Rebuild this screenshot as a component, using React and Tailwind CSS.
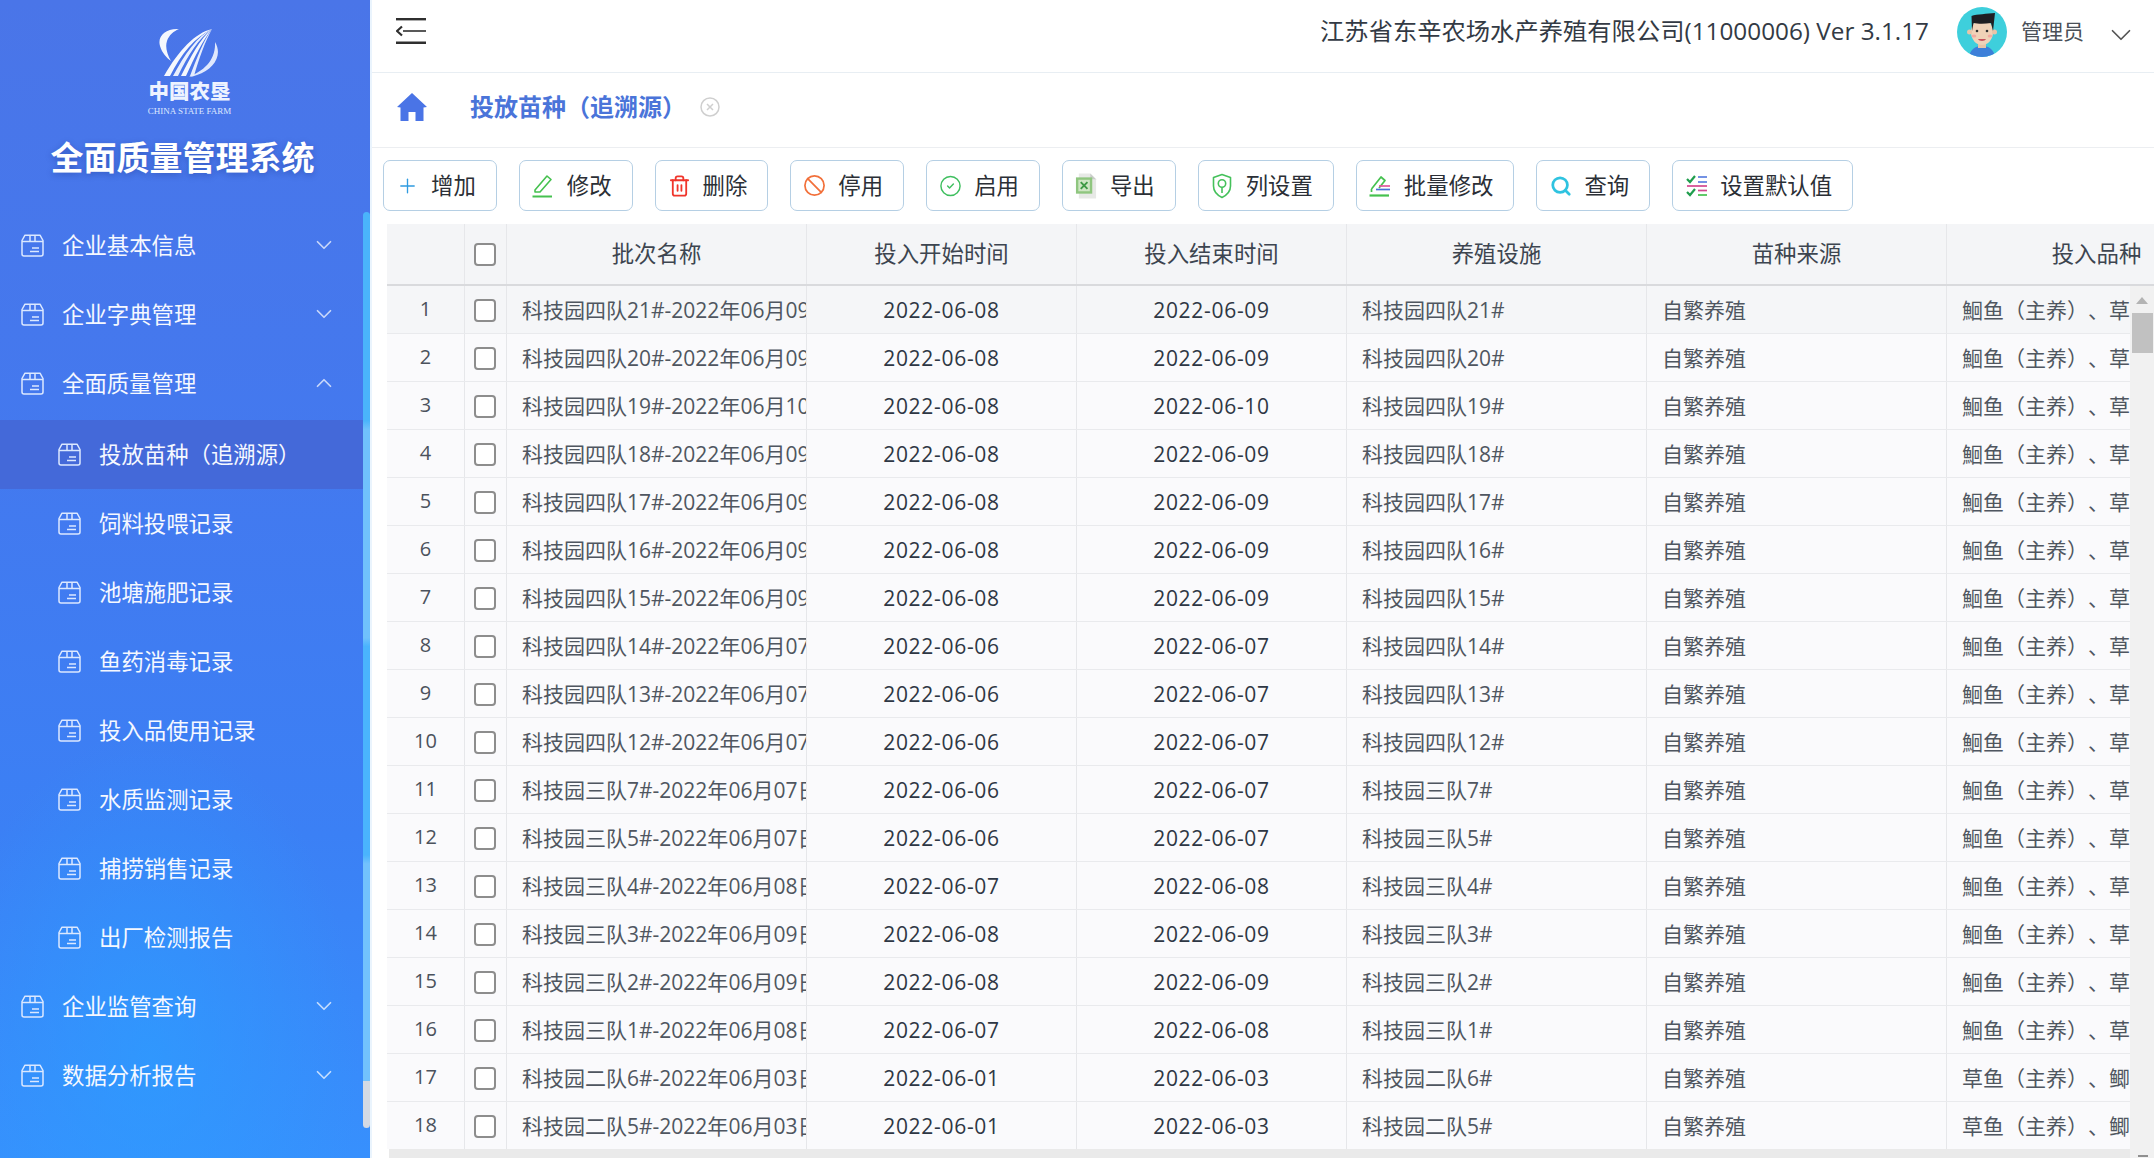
import React from "react";
import { Plus, Trash2, Ban, CircleCheck, Search, ChevronDown, ChevronUp } from "lucide-react";

const FONT = "[font-family:'Open_Sans','Noto_Sans_CJK_SC',sans-serif]";

function BoxIcon() {
  return (
    <svg width="23" height="23" viewBox="0 0 23 23" fill="none" stroke="#dbe8ff" strokeWidth="1.5" className="shrink-0">
      <path d="M1 6.5 L4 1.2 H19 L22 6.5 V20 a2 2 0 0 1 -2 2 H3 a2 2 0 0 1 -2 -2 Z" strokeLinejoin="round" />
      <path d="M1 7.5 H22" />
      <path d="M9 1.2 V7.5 M14 1.2 V7.5" />
      <path d="M11 14 H18 M9 17.5 H18" />
    </svg>
  );
}

function Logo() {
  return (
    <svg width="62" height="50" viewBox="0 0 62 50" fill="none" className="opacity-95 ml-[9px]">
      <path d="M20 1 C7 0 -2 8 1 18 C3 25 8 30 12 33 C8 26 6 19 8 13 C10 7 15 3 20 1 Z" fill="#ffffff" />
      <path d="M56 14 C64 27 55 41 38 47 C35 48 32 49 30 49 C44 43 57 33 56 14 Z" fill="#e8efff" />
      <path d="M53 1 C36 5 20 22 5 48 H11 C22 26 36 9 53 1 Z" fill="#ffffff" />
      <path d="M53 1 C38 8 26 26 14 48 H19 C29 27 40 10 53 1 Z" fill="#f2f6ff" />
      <path d="M53 1 C41 11 32 28 22 48 H27 C36 28 44 12 53 1 Z" fill="#ffffff" />
      <path d="M53 1 C44 13 38 30 31 48 H35 C40 30 46 14 53 1 Z" fill="#eef3ff" />
    </svg>
  );
}

function Avatar() {
  return (
    <svg width="50" height="50" viewBox="0 0 50 50" className="shrink-0">
      <defs>
        <clipPath id="av"><circle cx="25" cy="25" r="25" /></clipPath>
      </defs>
      <g clipPath="url(#av)">
        <rect width="50" height="50" fill="#3ecfdc" />
        <path d="M12 50 C13 42 19 39 25 39 C31 39 37 42 38 50 Z" fill="#3d7fd9" />
        <rect x="21" y="32" width="8" height="9" fill="#e8c4a8" />
        <ellipse cx="25" cy="25" rx="11" ry="13" fill="#f0d2b8" />
        <circle cx="12.5" cy="25" r="2.5" fill="#e8c4a8" />
        <circle cx="37.5" cy="25" r="2.5" fill="#e8c4a8" />
        <path d="M15 24 L14.5 9 C20 7 30 7 38 6 L36 24 L34 16 C28 17 21 17 16.5 16 Z" fill="#1e1e22" />
        <circle cx="20" cy="24" r="1.3" fill="#333" />
        <circle cx="30" cy="24" r="1.3" fill="#333" />
        <ellipse cx="17" cy="29" rx="2.4" ry="1.6" fill="#f3a9a2" />
        <ellipse cx="33" cy="29" rx="2.4" ry="1.6" fill="#f3a9a2" />
        <path d="M21 32 H29 C28 34.5 22 34.5 21 32 Z" fill="#c9515c" />
      </g>
    </svg>
  );
}

function EditIcon() {
  return (
    <svg width="22" height="26" viewBox="0 0 22 26" fill="none" stroke="#45c14f" strokeWidth="1.6">
      <path d="M3 17 L15 3 L19 6.5 L8 19 H3 Z" strokeLinejoin="round" />
      <path d="M0.5 23.5 H20" strokeWidth="2" />
    </svg>
  );
}
function ExcelIcon() {
  return (
    <svg width="26" height="30" viewBox="0 0 24 28">
      <path d="M4 1 H16 L22 7 V27 H4 Z" fill="#e7e9e6" />
      <path d="M16 1 L22 7 H16 Z" fill="#c9ccc9" />
      <rect x="1" y="5" width="17" height="17" fill="#8fc67f" />
      <rect x="3.5" y="7.5" width="12" height="12" fill="#cfe6c4" />
      <path d="M6 10 L13 17 M13 10 L6 17" stroke="#3f9a45" strokeWidth="2" />
    </svg>
  );
}
function ShieldIcon() {
  return (
    <svg width="20" height="26" viewBox="0 0 20 26" fill="none" stroke="#45c15b" strokeWidth="1.6">
      <path d="M10 1.5 L18.5 4.5 V13 C18.5 18.5 14 22.5 10 24.5 C6 22.5 1.5 18.5 1.5 13 V4.5 Z" strokeLinejoin="round" />
      <circle cx="10" cy="10.5" r="3.7" />
      <path d="M10 14.2 V20" />
    </svg>
  );
}
function BatchIcon() {
  return (
    <svg width="22" height="24" viewBox="0 0 22 24" fill="none" strokeWidth="1.7">
      <path d="M2.5 15 L12 3 L16 6.5 L10 14 M2.5 15 V18" stroke="#45c14f" strokeLinejoin="round" />
      <path d="M10 12 H21" stroke="#e2559b" />
      <path d="M7 15.5 H21" stroke="#4a6fd8" />
      <path d="M0.5 21.5 H20" stroke="#45c14f" strokeWidth="2.2" />
    </svg>
  );
}
function ChecklistIcon() {
  return (
    <svg width="22" height="22" viewBox="0 0 22 22" fill="none" strokeWidth="2.2">
      <path d="M1 4 L4 7 L9 1" stroke="#1f9d4d" />
      <path d="M1 17 L4 20 L9 14" stroke="#1f9d4d" />
      <path d="M12 2 H21" stroke="#5b7fe0" strokeWidth="1.7" />
      <path d="M12 7 H21" stroke="#5b7fe0" strokeWidth="1.7" />
      <path d="M1 11 H21" stroke="#d2478f" strokeWidth="1.7" />
      <path d="M12 15.5 H21" stroke="#d2478f" strokeWidth="1.7" />
      <path d="M12 20 H21" stroke="#45c14f" strokeWidth="1.7" />
    </svg>
  );
}

const buttons = [
  { t: "增加", i: <Plus size={24} color="#2f9be0" strokeWidth={1.4} /> },
  { t: "修改", i: <EditIcon /> },
  { t: "删除", i: <Trash2 size={24} color="#f0352b" strokeWidth={1.9} /> },
  { t: "停用", i: <Ban size={25} color="#f2703a" strokeWidth={1.8} /> },
  { t: "启用", i: <CircleCheck size={26} color="#3fbf5f" strokeWidth={1.5} /> },
  { t: "导出", i: <ExcelIcon /> },
  { t: "列设置", i: <ShieldIcon /> },
  { t: "批量修改", i: <BatchIcon /> },
  { t: "查询", i: <Search size={22} color="#2fc3e0" strokeWidth={3} /> },
  { t: "设置默认值", i: <ChecklistIcon /> },
];

const menu = [
  { t: "企业基本信息", c: "down" },
  { t: "企业字典管理", c: "down" },
  { t: "全面质量管理", c: "up" },
  { t: "投放苗种（追溯源）", sub: true, active: true },
  { t: "饲料投喂记录", sub: true },
  { t: "池塘施肥记录", sub: true },
  { t: "鱼药消毒记录", sub: true },
  { t: "投入品使用记录", sub: true },
  { t: "水质监测记录", sub: true },
  { t: "捕捞销售记录", sub: true },
  { t: "出厂检测报告", sub: true },
  { t: "企业监管查询", c: "down" },
  { t: "数据分析报告", c: "down" },
];

const rows = [
  ["科技园四队21#", "06月09", "06-08", "06-09"],
  ["科技园四队20#", "06月09", "06-08", "06-09"],
  ["科技园四队19#", "06月10", "06-08", "06-10"],
  ["科技园四队18#", "06月09", "06-08", "06-09"],
  ["科技园四队17#", "06月09", "06-08", "06-09"],
  ["科技园四队16#", "06月09", "06-08", "06-09"],
  ["科技园四队15#", "06月09", "06-08", "06-09"],
  ["科技园四队14#", "06月07", "06-06", "06-07"],
  ["科技园四队13#", "06月07", "06-06", "06-07"],
  ["科技园四队12#", "06月07", "06-06", "06-07"],
  ["科技园三队7#", "06月07", "06-06", "06-07"],
  ["科技园三队5#", "06月07", "06-06", "06-07"],
  ["科技园三队4#", "06月08", "06-07", "06-08"],
  ["科技园三队3#", "06月09", "06-08", "06-09"],
  ["科技园三队2#", "06月09", "06-08", "06-09"],
  ["科技园三队1#", "06月08", "06-07", "06-08"],
  ["科技园二队6#", "06月03", "06-01", "06-03"],
  ["科技园二队5#", "06月03", "06-01", "06-03"],
];

function Checkbox({ cls = "" }) {
  return <span className={`block w-[22px] h-[23px] -ml-[1px] bg-white border-2 border-[#8d8d8d] rounded-[4px] ${cls}`} />;
}

const colBorder = "border-r border-[#e6e7ea] shrink-0";

function HeaderCell({ w, children }) {
  return (
    <div className={`${w} ${colBorder} h-full flex items-center justify-center text-[22.4px] text-[#3d4550] pb-[1px]`}>
      {children}
    </div>
  );
}

export default function App() {
  return (
    <div className={`${FONT} w-[2154px] h-[1158px] overflow-hidden flex bg-white`}>
      <aside className="relative w-[370px] h-full shrink-0 text-white bg-[radial-gradient(ellipse_210px_330px_at_150px_1060px,#2c9dffaa,transparent),linear-gradient(180deg,#4a75e8_0%,#4379ef_40%,#3b80f5_72%,#3790fd_100%)]">
        <div className="h-[211px] flex flex-col items-center pt-[28px]">
          <Logo />
          <div className="ml-[9px] mt-[1px] text-[20.5px] leading-[24px] font-black text-[#eef3ff]">中国农垦</div>
          <div className="ml-[9px] mt-[3px] text-[9px] leading-[10px] text-[#dfe8ff] [font-family:'Liberation_Serif',serif] whitespace-nowrap">CHINA STATE FARM</div>
          <div className="-ml-[5px] mt-[20px] text-[33px] leading-[44px] font-bold [text-shadow:0_2px_6px_rgba(20,40,120,0.35)]">全面质量管理系统</div>
        </div>
        <nav className="w-[363px]">
          {menu.map((m) => (
            <div
              key={m.t}
              className={`h-[69px] flex items-center gap-[18px] text-[22.4px] ${m.sub ? "pl-[58px]" : "pl-[21px]"} ${m.active ? "bg-[#4469d9] mt-[2px]" : ""}`}
            >
              <BoxIcon />
              <span className="text-[#f5f8ff] whitespace-nowrap">{m.t}</span>
              {m.c === "down" && <ChevronDown size={26} strokeWidth={1.6} className="ml-auto mr-[26px] -mt-[2px] text-white/70" />}
              {m.c === "up" && <ChevronUp size={26} strokeWidth={1.6} className="ml-auto mr-[26px] -mt-[2px] text-white/70" />}
            </div>
          ))}
        </nav>
        <div className="absolute right-0 top-[212px] w-[7px] h-[869px] rounded-t-[4px] bg-[linear-gradient(180deg,#4ab4fb_0%,#4ab4fb_24%,#70c1fc_25%,#70c1fc_49%,#4ab4fd_50%,#4ab4fd_74%,#72c2fd_75%,#72c2fd_100%)]" />
        <div className="absolute right-0 top-[1081px] w-[7px] h-[47px] rounded-b-[4px] bg-[#d4dae4]" />
      </aside>

      <main className="flex-1 min-w-0 h-full flex flex-col border-l-2 border-[#eaf4fd]">
        <header className="h-[73px] shrink-0 flex items-center border-b border-[#e8eef3]">
          <svg width="30" height="26" viewBox="0 0 30 26" fill="none" className="ml-[24px] -mt-[10px]" stroke="#2f2f2f">
            <path d="M0 1.2 H30" strokeWidth="2.4" />
            <path d="M7 13 H30" strokeWidth="1.6" />
            <path d="M6 8.5 L1 13 L6 17.5" strokeWidth="2.2" />
            <path d="M0 24.8 H30" strokeWidth="2.6" />
          </svg>
          <div className="ml-auto text-[24.3px] text-[#333a44] whitespace-nowrap -mt-[9px]">江苏省东辛农场水产养殖有限公司(11000006) Ver 3.1.17</div>
          <div className="ml-[28px] -mt-[8px]"><Avatar /></div>
          <div className="ml-[14px] text-[21px] text-[#4a5058] -mt-[9px]">管理员</div>
          <ChevronDown size={34} strokeWidth={1.2} className="ml-[20px] mr-[16px] -mt-[2px] text-[#555]" />
        </header>

        <div className="h-[75px] shrink-0 flex items-center border-b border-[#eceef1] pb-[7px]">
          <svg width="30" height="30" viewBox="0 0 30 30" className="ml-[25px]">
            <path d="M15 1 L30 15 L26.5 15.5 V29 H18.5 V20 H11.5 V29 H3.5 V15.5 L0 15 Z" fill="#4a74e6" strokeLinejoin="round" />
          </svg>
          <div className="ml-[43px] text-[24px] font-bold text-[#4a74d9] whitespace-nowrap">投放苗种（追溯源）</div>
          <svg width="20" height="20" viewBox="0 0 20 20" fill="none" stroke="#cfcfcf" strokeWidth="1.5" className="ml-[14px]">
            <circle cx="10" cy="10" r="9" />
            <path d="M7 7 L13 13 M13 7 L7 13" />
          </svg>
        </div>

        <div className="h-[76px] shrink-0 pl-[11px] pt-[12px] flex gap-[22px] items-start">
          {buttons.map((b) => (
            <div key={b.t} className="h-[51px] flex items-center pl-[12px] pr-[20px] bg-white border border-[#b5cfe4] rounded-[7px] shrink-0">
              <span className="w-[23px] flex items-center justify-center mr-[12px]">{b.i}</span>
              <span className="text-[22.4px] text-[#2b2f36] whitespace-nowrap">{b.t}</span>
            </div>
          ))}
        </div>

        <div className="h-[62px] shrink-0 ml-[15px] flex bg-[#f4f5f7] border-b-2 border-[#d9dadd] overflow-hidden">
          <HeaderCell w="w-[78px]" />
          <HeaderCell w="w-[42px]"><Checkbox cls="mt-[1px]" /></HeaderCell>
          <HeaderCell w="w-[300px]">批次名称</HeaderCell>
          <HeaderCell w="w-[270px]">投入开始时间</HeaderCell>
          <HeaderCell w="w-[270px]">投入结束时间</HeaderCell>
          <HeaderCell w="w-[300px]">养殖设施</HeaderCell>
          <HeaderCell w="w-[300px]">苗种来源</HeaderCell>
          <HeaderCell w="w-[300px]">投入品种</HeaderCell>
        </div>

        <div className="flex-1 min-h-0 flex">
          <div className="flex-1 min-w-0 flex flex-col">
            <div className="flex-1 min-h-0 ml-[15px] overflow-hidden">
              {rows.map((r, i) => (
                <div key={i} className={`flex h-[48px] text-[21px] border-b border-[#e9eaed] ${i === 0 ? "bg-[#f5f6f8]" : "bg-[#fafafc]"}`}>
                  <div className={`w-[78px] ${colBorder} flex items-center justify-center text-[20px] text-[#4b525c]`}>
                    <span className="-mt-[2px]">{i + 1}</span>
                  </div>
                  <div className={`w-[42px] ${colBorder} flex items-center justify-center`}><Checkbox cls="mt-[2px]" /></div>
                  <div className={`w-[300px] ${colBorder} flex items-center pl-[15px] pt-[2px] overflow-hidden whitespace-nowrap text-[#4f5660]`}>
                    {r[0]}-2022年{r[1]}日批次
                  </div>
                  <div className={`w-[270px] ${colBorder} flex items-center justify-center pt-[2px] text-[#2e3744] tracking-[0.7px]`}>2022-{r[2]}</div>
                  <div className={`w-[270px] ${colBorder} flex items-center justify-center pt-[2px] text-[#2e3744] tracking-[0.7px]`}>2022-{r[3]}</div>
                  <div className={`w-[300px] ${colBorder} flex items-center pl-[15px] pt-[2px] text-[#4f5660] whitespace-nowrap`}>{r[0]}</div>
                  <div className={`w-[300px] ${colBorder} flex items-center pl-[15px] pt-[2px] text-[#4f5660] whitespace-nowrap`}>自繁养殖</div>
                  <div className="w-[300px] shrink-0 flex items-center pl-[15px] pt-[2px] text-[#4f5660] whitespace-nowrap [text-spacing-trim:space-all]">
                    {i >= 16 ? "草鱼（主养）、鲫鱼（混养）" : "鮰鱼（主养）、草鱼（混养）"}
                  </div>
                </div>
              ))}
            </div>
            <div className="h-[9px] shrink-0 ml-[17px] bg-[#eaeaea]" />
          </div>
          <div className="w-[24px] h-full shrink-0 bg-[#f1f1f1] flex flex-col items-center relative">
            <svg width="12" height="7" viewBox="0 0 12 7" className="mt-[11px]"><path d="M6 0 L12 7 H0 Z" fill="#b3b3b3" /></svg>
            <div className="mt-[9px] ml-[1px] w-[21px] h-[40px] bg-[#c1c1c1]" />
            <div className="absolute left-[8px] bottom-[1px] w-[10px] h-[2px] bg-[#8f8f8f]" />
          </div>
        </div>
      </main>
    </div>
  );
}
